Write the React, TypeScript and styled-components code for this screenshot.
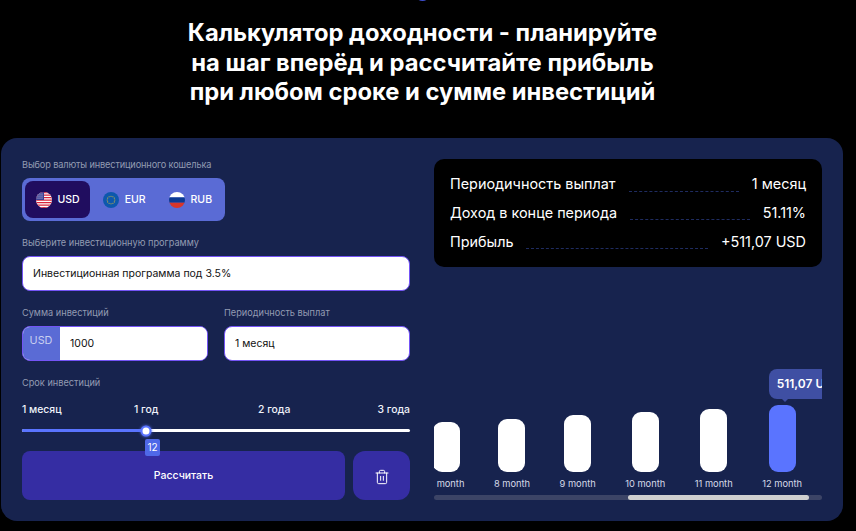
import React from "react";
import styled, { createGlobalStyle } from "styled-components";
import { Trash2 } from "lucide-react";

const Global = createGlobalStyle`
  html, body { margin: 0; padding: 0; background: #000; }
  body { font-family: Inter, "Noto Sans", sans-serif; color: #fff; }
  * { box-sizing: border-box; }
`;

const Page = styled.main`
  position: relative;
  width: 856px;
  height: 531px;
  overflow: hidden;
  background: #000;
  padding: 18px 13px 0 1px;
`;
const TopMark = styled.div`
  position: absolute;
  left: 415px;
  top: -13px;
  width: 15px;
  height: 14px;
  border-radius: 50%;
  background: #3f4fd0;
`;
const Title = styled.h1`
  margin: 0 0 31.5px;
  padding-left: 1px;
  font-size: 23.75px;
  line-height: 29.5px;
  font-weight: 700;
  text-align: center;
  color: #fff;
`;
const Card = styled.section`
  height: 383px;
  background: #17234e;
  border-radius: 16px;
  padding: 21px;
  display: grid;
  grid-template-columns: 388px 388px;
  column-gap: 24px;
`;
const Left = styled.div`
  display: flex;
  flex-direction: column;
`;
const Right = styled.div`
  display: flex;
  flex-direction: column;
  justify-content: space-between;
`;
const Field = styled.div`
  margin-bottom: 16px;
  min-width: 0;
`;
const Label = styled.div<{ $tight?: boolean }>`
  font-size: 9.2px;
  line-height: 11px;
  color: #939bb2;
  margin-bottom: 8px;
  font-weight: 400;
  letter-spacing: ${(p) => (p.$tight ? "-0.13px" : "0")};
`;
const Tabs = styled.div`
  display: inline-flex;
  gap: 2px;
  height: 43px;
  width: 203px;
  padding: 3px;
  background: #5a6bd5;
  border-radius: 8px;
`;
const Tab = styled.div<{ $active?: boolean }>`
  display: flex;
  align-items: center;
  gap: 6px;
  padding: 0 10.5px;
  border-radius: 8px;
  font-size: 10.5px;
  font-weight: 500;
  color: #fff;
  background: ${(p) => (p.$active ? "#200d5f" : "transparent")};
`;
const Flag = styled.svg`
  width: 16px;
  height: 16px;
  border-radius: 50%;
  flex: none;
`;
const Input = styled.input`
  display: block;
  width: 100%;
  height: 35px;
  border: 1px solid #7454f5;
  border-radius: 8px;
  background: #fff;
  padding: 0 10px;
  font: 400 10.5px Inter, sans-serif;
  color: #111;
  outline: none;
`;
const Pair = styled.div`
  display: grid;
  grid-template-columns: 186px 186px;
  column-gap: 16px;
`;
const Group = styled.div`
  display: flex;
  height: 35px;
  border: 1px solid #7454f5;
  border-radius: 8px;
  background: #fff;
  overflow: hidden;
`;
const Prefix = styled.div`
  width: 38px;
  margin: -1px 0 -1px -1px;
  padding-top: 8px;
  background: #5a6bd5;
  color: #c9cff0;
  font-size: 10.8px;
  text-align: center;
`;
const BareInput = styled(Input)`
  border: 0;
  height: 33px;
  border-radius: 0;
  flex: 1;
  min-width: 0;
`;
const Marks = styled.div`
  display: grid;
  grid-template-columns: 112px 124px 120px 32px;
  margin-top: 15px;
  font-size: 10.4px;
  line-height: 14px;
  font-weight: 500;
  color: #f0f2fa;
`;
const End = styled.span`
  white-space: nowrap;
  justify-self: end;
`;
const Slider = styled.div`
  position: relative;
  height: 3px;
  margin-top: 12px;
  margin-bottom: 19px;
  border-radius: 2px;
  background: #fff;
`;
const Fill = styled.div`
  height: 100%;
  border-radius: 2px;
  background: #5a74ff;
`;
const Thumb = styled.div`
  position: absolute;
  top: 50%;
  width: 11px;
  height: 11px;
  border-radius: 50%;
  background: #fff;
  border: 2px solid #5a74ff;
  box-shadow: 0 0 3px #5a74ff;
  transform: translate(-50%, -50%);
`;
const Badge = styled.div`
  position: absolute;
  top: 10px;
  width: 15px;
  height: 17px;
  margin-left: -1px;
  border-radius: 2px;
  background: #4f68e8;
  font-size: 10px;
  line-height: 17px;
  text-align: center;
  color: #fff;
  z-index: 2;
`;
const Actions = styled.div`
  display: flex;
  gap: 8px;
`;
const Submit = styled.button`
  flex: 1;
  height: 49px;
  border: 0;
  border-radius: 8px;
  background: #352da3;
  color: #fff;
  font: 500 10.5px Inter, sans-serif;
  padding: 0;
`;
const IconButton = styled.button`
  width: 57px;
  height: 49px;
  border: 0;
  border-radius: 12px;
  background: #352da3;
  color: #fff;
  display: flex;
  align-items: center;
  justify-content: center;
  padding: 2px 0 0;
`;
const Summary = styled.div`
  height: 108px;
  background: #000;
  border-radius: 10px;
  padding: 10.5px 16px;
`;
const Row = styled.div`
  display: flex;
  align-items: center;
  gap: 13px;
  height: 28.7px;
  font-size: 14.4px;
  color: #fff;
  white-space: nowrap;
`;
const Dots = styled.span`
  flex: 1;
  align-self: flex-start;
  height: 22px;
  border-bottom: 1px dashed #1f2c60;
`;
const Chart = styled.div`
  position: relative;
  height: 131px;
  overflow: hidden;
  display: flex;
  flex-direction: column;
  justify-content: flex-end;
  margin-bottom: 1px;
`;
const Columns = styled.div`
  display: flex;
  justify-content: flex-end;
  align-items: flex-end;
  gap: 29.5px;
  padding-right: 20px;
`;
const Column = styled.div`
  position: relative;
  display: flex;
  flex-direction: column;
  align-items: center;
  flex: none;
`;
const Bar = styled.div<{ $current?: boolean }>`
  width: 27px;
  border-radius: 9px;
  background: ${(p) => (p.$current ? "#5a74ff" : "#fff")};
`;
const BarLabel = styled.div`
  margin-top: 6px;
  font-size: 9.3px;
  line-height: 12px;
  color: #d5d9e8;
  white-space: nowrap;
`;
const Tip = styled.div`
  position: absolute;
  left: 6.5px;
  bottom: 91px;
  height: 30px;
  padding: 0 8px;
  border-radius: 8px;
  background: #3f4fa3;
  color: #fff;
  font-size: 12px;
  font-weight: 600;
  line-height: 29px;
  white-space: nowrap;
  &::after {
    content: "";
    position: absolute;
    left: 13px;
    bottom: -3px;
    border-left: 3px solid transparent;
    border-right: 3px solid transparent;
    border-top: 3px solid #3f4fa3;
  }
`;
const Scroll = styled.div`
  height: 5px;
  margin-top: 5px;
  border-radius: 3px;
  background: #3c4466;
  display: flex;
  padding-left: 194px;
  padding-right: 13px;
`;
const ScrollThumb = styled.div`
  flex: 1;
  border-radius: 3px;
  background: #cfcfcf;
`;

const UsFlag = () => (
  <Flag viewBox="0 0 16 16">
    <rect width="16" height="16" fill="#fff" />
    {[0, 2.5, 5, 7.5, 10, 12.5, 15].map((y) => (
      <rect key={y} y={y} width="16" height="1.25" fill="#d8243c" />
    ))}
    <rect width="8" height="8" fill="#3b3f94" />
    {[2, 4, 6].map((x) =>
      [2, 4, 6].map((y) => <circle key={`${x}-${y}`} cx={x} cy={y} r="0.5" fill="#fff" />)
    )}
  </Flag>
);
const EuFlag = () => (
  <Flag viewBox="0 0 16 16">
    <rect width="16" height="16" fill="#0d58ad" />
    {Array.from({ length: 12 }, (_, i) => {
      const a = (i * Math.PI) / 6;
      return <circle key={i} cx={8 + 3.8 * Math.cos(a)} cy={8 + 3.8 * Math.sin(a)} r="0.55" fill="#e8c02e" />;
    })}
  </Flag>
);
const RuFlag = () => (
  <Flag viewBox="0 0 16 16">
    <rect width="16" height="5.4" fill="#fff" />
    <rect y="5.4" width="16" height="5.3" fill="#0b3a94" />
    <rect y="10.7" width="16" height="5.3" fill="#d8352a" />
  </Flag>
);

const bars = [
  { m: 7, h: 50 },
  { m: 8, h: 53 },
  { m: 9, h: 57 },
  { m: 10, h: 60 },
  { m: 11, h: 63 },
  { m: 12, h: 67 },
];
const rows = [
  ["Периодичность выплат", "1 месяц"],
  ["Доход в конце периода", "51.11%"],
  ["Прибыль", "+511,07 USD"],
];
const sliderPercent = (124 / 388) * 100;

export default function App() {
  return (
    <Page>
      <Global />
      <TopMark />
      <Title>
        Калькулятор доходности - планируйте
        <br />
        на шаг вперёд и рассчитайте прибыль
        <br />
        при любом сроке и сумме инвестиций
      </Title>
      <Card>
        <Left>
          <Field>
            <Label $tight>Выбор валюты инвестиционного кошелька</Label>
            <Tabs>
              <Tab $active><UsFlag />USD</Tab>
              <Tab><EuFlag />EUR</Tab>
              <Tab><RuFlag />RUB</Tab>
            </Tabs>
          </Field>
          <Field>
            <Label>Выберите инвестиционную программу</Label>
            <Input readOnly value="Инвестиционная программа под 3.5%" />
          </Field>
          <Pair>
            <Field>
              <Label>Сумма инвестиций</Label>
              <Group>
                <Prefix>USD</Prefix>
                <BareInput readOnly value="1000" />
              </Group>
            </Field>
            <Field>
              <Label>Периодичность выплат</Label>
              <Input readOnly value="1 месяц" />
            </Field>
          </Pair>
          <div>
            <Label>Срок инвестиций</Label>
            <Marks>
              <span>1 месяц</span>
              <span>1 год</span>
              <span>2 года</span>
              <End>3 года</End>
            </Marks>
            <Slider>
              <Fill style={{ width: `${sliderPercent}%` }} />
              <Thumb style={{ left: `${sliderPercent}%` }} />
              <Badge style={{ left: `${sliderPercent}%` }}>12</Badge>
            </Slider>
            <Actions>
              <Submit>Рассчитать</Submit>
              <IconButton aria-label="Удалить">
                <Trash2 size={16} strokeWidth={1.5} />
              </IconButton>
            </Actions>
          </div>
        </Left>
        <Right>
          <Summary>
            {rows.map(([k, v]) => (
              <Row key={k}>
                <span>{k}</span>
                <Dots />
                <span>{v}</span>
              </Row>
            ))}
          </Summary>
          <div>
            <Chart>
              <Columns>
                {bars.map((b) => (
                  <Column key={b.m}>
                    {b.m === 12 && <Tip>511,07 USD</Tip>}
                    <Bar $current={b.m === 12} style={{ height: b.h }} />
                    <BarLabel>{b.m} month</BarLabel>
                  </Column>
                ))}
              </Columns>
            </Chart>
            <Scroll>
              <ScrollThumb />
            </Scroll>
          </div>
        </Right>
      </Card>
    </Page>
  );
}
